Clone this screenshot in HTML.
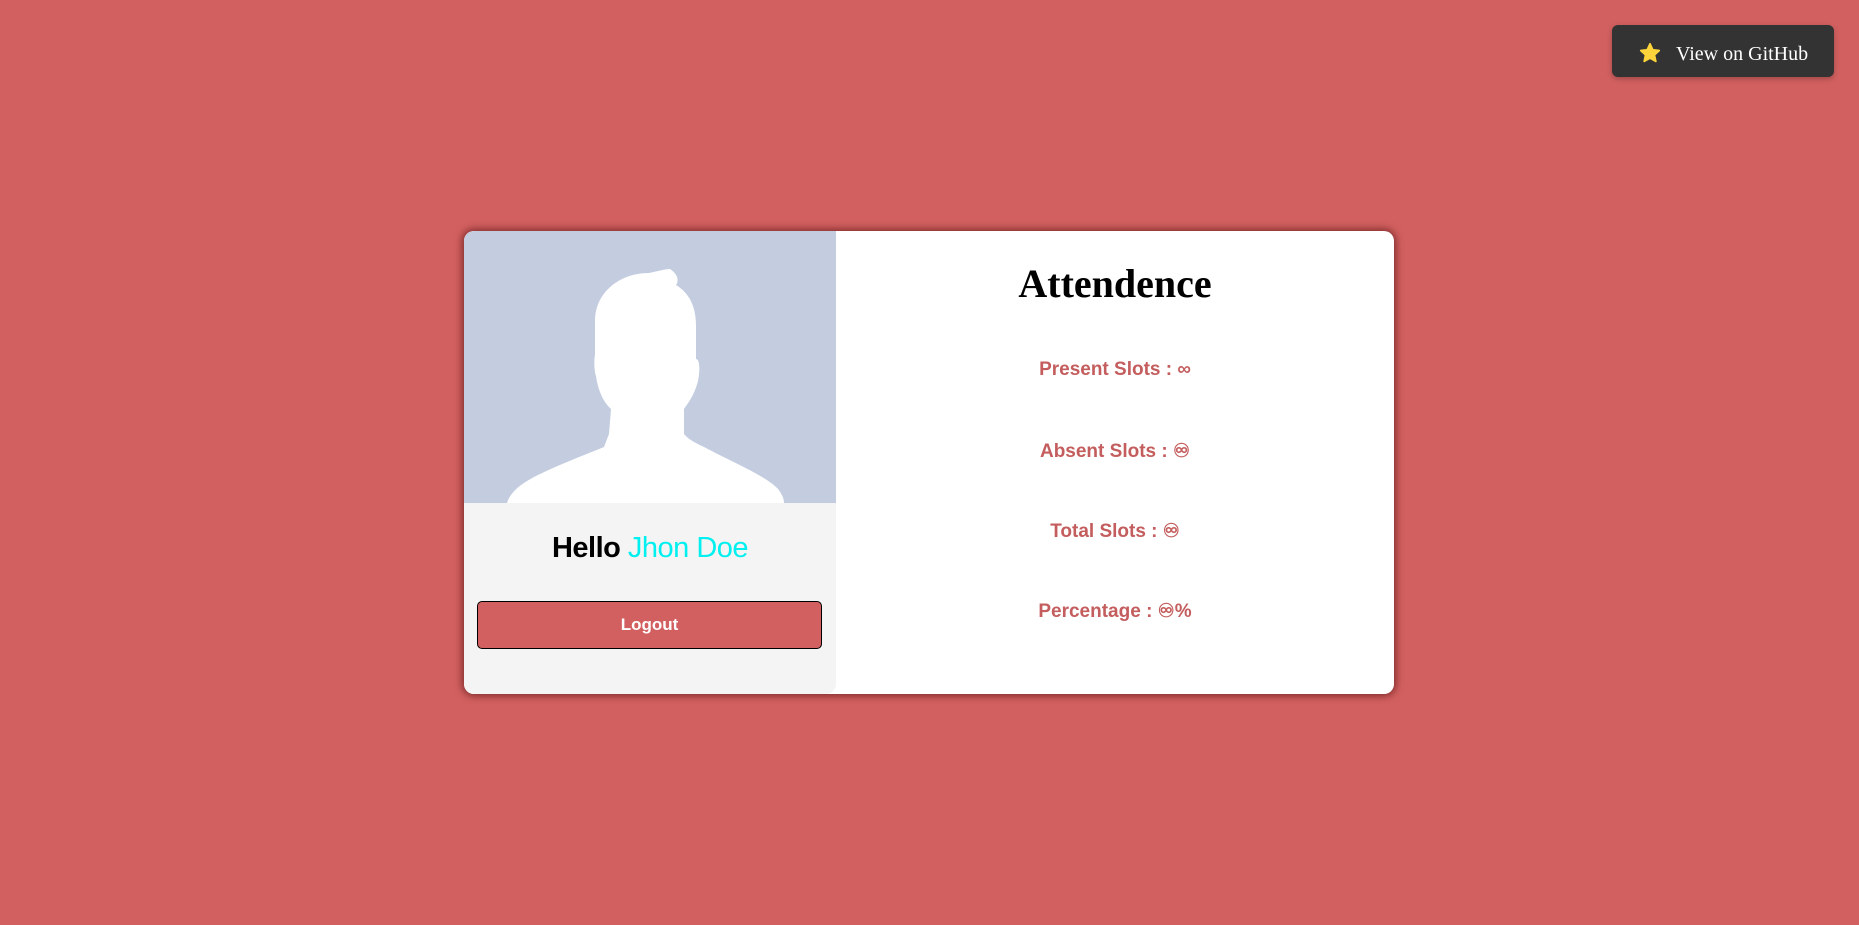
<!DOCTYPE html>
<html><head><style>
html,body{margin:0;padding:0;}
body{width:1859px;height:925px;background:#d36060;position:relative;overflow:hidden;font-family:"Liberation Sans",sans-serif;}
.gh{position:absolute;left:1612px;top:25px;width:222px;height:52px;background:#333;border-radius:6px;box-shadow:0 2px 6px rgba(0,0,0,.25);color:#fff;font-family:"Liberation Serif",serif;font-size:20px;line-height:52px;}
.gh span{position:absolute;left:64px;top:3px;}
.gh svg{position:absolute;left:27px;top:17px;}
.card{position:absolute;left:464px;top:231px;width:930px;height:463px;background:#fff;border-radius:10px;box-shadow:0 0 8px 2px rgba(60,0,0,.55);overflow:hidden;}
.left{position:absolute;left:0;top:0;width:372px;height:463px;background:#f4f4f4;border-bottom-right-radius:10px;}
.img{position:absolute;left:0;top:0;width:372px;height:272px;background:#c4cde0;}
.hello{position:absolute;left:0;top:301px;width:372px;text-align:center;font-weight:bold;font-size:29px;color:#000;letter-spacing:-0.5px;}
.hello b{color:#00f0f0;font-weight:normal;}
.btn{position:absolute;left:13px;top:370px;width:345px;height:48px;box-sizing:border-box;border:1px solid #000;border-radius:5px;background:#d36060;color:#fff;font-weight:bold;font-size:17px;text-align:center;line-height:46px;}
.title{position:absolute;left:372px;width:558px;top:29px;text-align:center;font-family:"Liberation Serif",serif;font-weight:bold;font-size:40px;}
.it{position:absolute;left:372px;width:558px;text-align:center;font-weight:bold;font-size:19px;color:#c45d5d;}
</style></head><body>
<div class="gh"><svg width="22" height="22" viewBox="0 0 24 24"><path d="M12 2l3 6.5 7 .8-5.2 4.8 1.5 7L12 17.5 5.7 21.1l1.5-7L2 9.3l7-.8z" fill="#fcd33a" stroke="#fcd33a" stroke-linejoin="round" stroke-width="2"/></svg><span>View on GitHub</span></div>
<div class="card">
<div class="left">
<div class="img"><svg width="372" height="272" viewBox="0 0 372 272"><path d="M206 38 C212 42 216 48 212 54 C225 62 232 75 232 95 L232 128 C236 128 236 140 234 150 C230 165 224 172 220 178 L220 203 C226 210 234 213 240 216 C270 232 302 245 314 258 C318 263 320 268 320 272 L43 272 C46 262 55 254 70 246 C90 236 110 228 140 216 L145 203 L147 178 C140 172 134 160 132 145 C130 140 130 128 131 124 L131 90 C131 62 155 42 185 42 C195 40 201 38 206 38Z" fill="#fff"/></svg></div>
<div class="hello">Hello <b>Jhon Doe</b></div>
<div class="btn">Logout</div>
</div>
<div class="title">Attendence</div>
<div class="it" style="top:128px">Present Slots : ∞</div>
<div class="it" style="top:209px">Absent Slots : ♾</div>
<div class="it" style="top:289px">Total Slots : ♾</div>
<div class="it" style="top:369px">Percentage : ♾%</div>
</div>
</body></html>
